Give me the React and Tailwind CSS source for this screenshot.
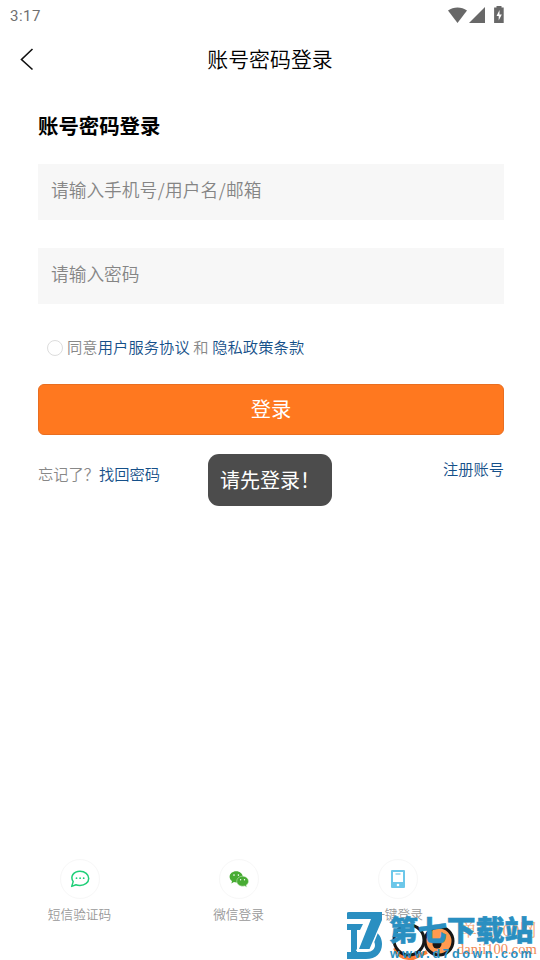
function StatusIcons() {
  return (
    <svg className="h-5 w-[60px]" viewBox="0 0 60 20" fill="#686868">
      <path d="M0 4.600C5.500.5 13.500.5 19 4.600L9.500 17Z" />
      <path d="M37 1v16H21Z" />
      <path d="M48.500 1.600V0h5v1.600h2.200V17h-9.600V1.600Z" />
      <path d="M51.500 4 48.500 10h2.200v4.500L53.800 8.500h-2.300Z" fill="#fff" />
    </svg>
  );
}

function ChatIcon() {
  return (
    <svg className="h-5 w-5" viewBox="0 0 20 20" fill="none" stroke="#1fcf78" strokeWidth="1.500">
      <path d="M3.200 12.600C-.2 7.500 3.600 2.300 10 2.300c4.900 0 8.700 3.100 8.700 7.100s-3.800 7-8.700 7c-1.600 0-2.900-.2-4.100-.7l-4.200 1.700Z" strokeLinejoin="round" />
      <g fill="#1fcf78" stroke="none">
        <circle cx="6.500" cy="9.200" r=".9" />
        <circle cx="10.100" cy="9.200" r=".9" />
        <circle cx="13.700" cy="9.200" r=".9" />
      </g>
    </svg>
  );
}

function WechatIcon() {
  return (
    <svg className="h-5 w-5" viewBox="0 0 20 20">
      <path d="M7.200 2.200C3.500 2.200.6 4.600.6 7.800c0 1.800.9 3.300 2.400 4.300l-.6 2.300 2.500-1.300c.8.200 1.500.3 2.300.3 3.700 0 6.600-2.500 6.600-5.600s-2.900-5.600-6.600-5.600Z" fill="#48ac34" />
      <path d="M13.600 7.200c-3.300 0-5.900 2.200-5.900 5s2.600 5 5.900 5c.7 0 1.400-.1 2-.3l2.100 1.200-.5-2c1.400-.9 2.300-2.300 2.300-3.900 0-2.800-2.700-5-5.900-5Z" fill="#48ac34" stroke="#d9efd5" strokeWidth=".5" />
      <g fill="#fff">
        <circle cx="5" cy="6.100" r=".8" />
        <circle cx="9.400" cy="6.100" r=".8" />
        <circle cx="11.600" cy="10.800" r=".7" />
        <circle cx="15.500" cy="10.800" r=".7" />
      </g>
    </svg>
  );
}

function PhoneIcon() {
  return (
    <svg className="h-5 w-5" viewBox="0 0 20 20">
      <rect x="3" y="1" width="14" height="18" rx="1" fill="#6cc7e9" />
      <path d="M5 3h10v10H5Z" fill="#fff" />
      <path d="M7.500 5h5" stroke="#6cc7e9" strokeWidth="1.200" />
      <circle cx="10" cy="16" r="1.300" fill="#fff" />
    </svg>
  );
}

function LoginOption({ icon, label }) {
  return (
    <div className="flex w-[159px] flex-col items-center">
      <div className="flex h-10 w-10 items-center justify-center rounded-full border border-[#f7f7f7]">{icon}</div>
      <span className="mt-[5px] text-[12.700px] leading-5 font-[350] text-[#999]">{label}</span>
    </div>
  );
}

function Watermark() {
  return (
    <div className="absolute right-0 bottom-0 h-[50px] w-[195px]">
      <svg className="absolute inset-0 h-[50px] w-[195px]" viewBox="0 0 195 50">
        <path d="M50 38Q54 49 68 48L82 42" fill="none" stroke="#ff7d34" strokeWidth="4" />
        <circle cx="64" cy="30" r="15" fill="#fff" fillOpacity=".4" stroke="#171717" strokeWidth="3" />
        <circle cx="94" cy="31" r="14" fill="#ff9a50" stroke="#171717" strokeWidth="3" />
        <circle cx="92" cy="34" r="4.500" fill="#171717" />
      </svg>
      <div className="absolute top-[11px] left-[115px] font-['Liberation_Serif','Noto_Serif_CJK_SC','Noto_Sans_CJK_SC',serif] text-[17px] leading-5 whitespace-nowrap text-[#f4a87c]">单机100网</div>
      <div className="absolute top-[29px] left-[112px] font-['Liberation_Serif',serif] text-[14.600px] leading-5 whitespace-nowrap text-[#f08a56]">danji100.com</div>
      <svg className="absolute inset-0 h-[50px] w-[195px]" viewBox="0 0 195 50">
        <path d="M2 14h16l-3 6h-3v22h10c5 0 8-3 8-7 0-3-2-5-4-6l3-8c5 2 8 7 8 13 0 9-6 15-16 15H2v-7h4V20H2Z" fill="#2a8fc1" />
        <path d="M26 9 12.500 40H25L37 10" fill="none" stroke="#fff" strokeWidth="2" />
        <path d="M2 3q0-1 2-1h33v8L24.500 39H14L26 9H2Z" fill="#2a8fc1" />
      </svg>
      <div className="absolute top-[1px] left-[44px] text-[28.900px] leading-[34px] font-black whitespace-nowrap text-[#2a8fc1] [-webkit-text-stroke:.5px_#2a8fc1]">第七下载站</div>
      <div className="absolute top-[35px] left-[45px] font-['Liberation_Sans',sans-serif] text-[12.500px] leading-[18px] font-bold tracking-[2.550px] whitespace-nowrap text-[#2a8fc1]">www.d7down.com</div>
    </div>
  );
}

export default function App() {
  return (
    <div className="relative flex h-[960px] w-[540px] flex-col overflow-hidden bg-white font-['Noto_Sans_CJK_SC',sans-serif] text-black">
      <header>
        <div className="flex h-8 items-center justify-between pr-8 pl-[10px]">
          <span className="font-[Roboto,sans-serif] text-[15px] leading-5 tracking-[.5px] text-[#707070]">3:17</span>
          <StatusIcons />
        </div>
        <div className="grid h-[54px] grid-cols-[60px_1fr_60px] items-center">
          <svg className="ml-5 h-6 w-4" viewBox="0 0 16 24" fill="none" stroke="#111" strokeWidth="1.600"><path d="M12.500 2 1.500 12.500l11 10" /></svg>
          <div className="-mt-0.5 text-center text-[20.900px] leading-8 font-[350]">账号密码登录</div>
        </div>
      </header>
      <main className="pr-9 pl-[38px]">
        <h1 className="mt-[23px] text-[20.400px] leading-8 font-bold">账号密码登录</h1>
        <div className="mt-[23px] h-14 bg-[#f7f7f7] px-[13px] pt-[13px] text-[17.700px] leading-6 font-[350] text-[#858585]">请输入手机号<span className="mx-[.5px]">/</span>用户名<span className="mx-[.5px]">/</span>邮箱</div>
        <div className="mt-7 h-14 bg-[#f7f7f7] px-[13px] pt-[13px] text-[17.700px] leading-6 font-[350] text-[#858585]">请输入密码</div>
        <div className="mt-[31px] ml-[9px] flex h-6 items-start text-[15.250px] leading-6 font-[350] whitespace-pre text-[#888]">
          <span className="mt-[5px] mr-1 h-4 w-4 rounded-full border border-[#ddd]" />
          <span className="-mt-[1px] tracking-[.1px]">同意<span className="text-[#155089]">用户服务协议</span> 和 <span className="text-[#155089]">隐私政策条款</span></span>
        </div>
        <button className="mt-[25px] block h-[51px] w-full rounded-md border border-[#e96e20] bg-[#ff781f] pb-1 text-[20.300px] leading-8 text-white">登录</button>
        <div className="mt-[21px] flex justify-between text-[15.250px] leading-6 font-[350]">
          <span className="mt-[5px] text-[#888]">忘记了？<span className="text-[#155089]">找回密码</span></span>
          <span className="text-[#155089]">注册账号</span>
        </div>
      </main>
      <footer className="mt-auto mb-[36px] flex">
        <LoginOption icon={<ChatIcon />} label="短信验证码" />
        <LoginOption icon={<WechatIcon />} label="微信登录" />
        <LoginOption icon={<PhoneIcon />} label="一键登录" />
      </footer>
      <div className="absolute top-[454px] left-[208px] flex h-[52px] w-[124px] items-center rounded-[11px] bg-[#4c4c4c] pl-3 text-[20px] leading-8 whitespace-nowrap text-white">请先登录！</div>
      <Watermark />
    </div>
  );
}
